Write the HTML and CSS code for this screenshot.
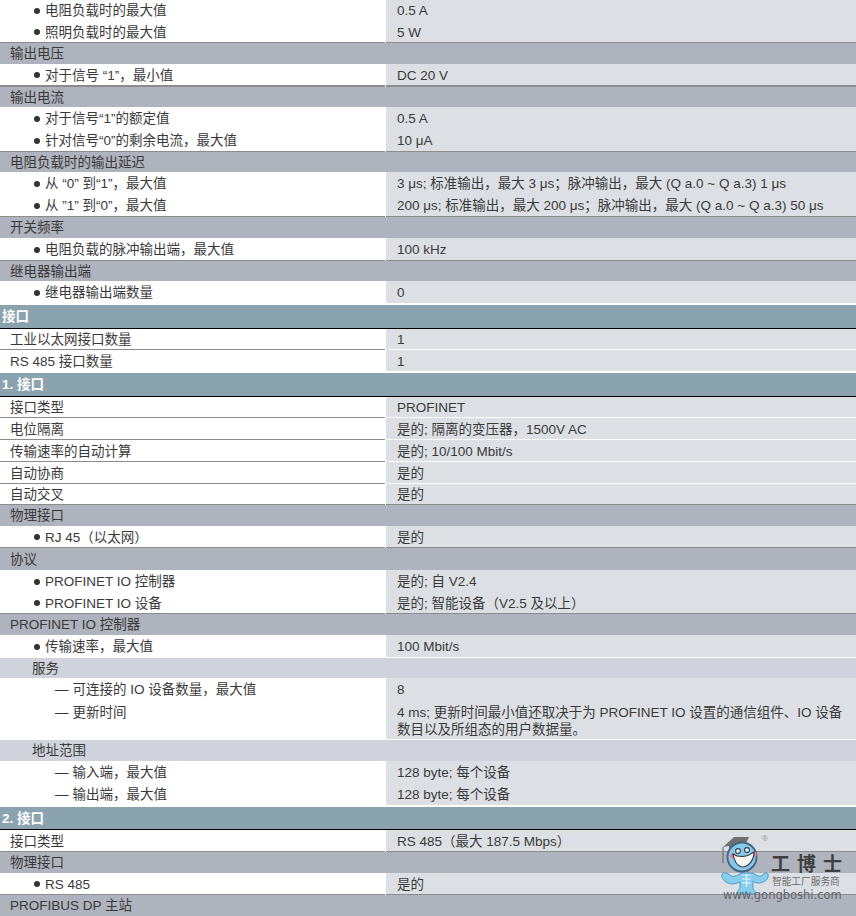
FILE: index.html
```html
<!DOCTYPE html>
<html lang="zh-CN">
<head>
<meta charset="utf-8">
<title>技术规范</title>
<link rel="stylesheet" href="styles.css">
</head>
<body>
<main class="spec">
  <div class="row h21 first"><div class="c bul">电阻负载时的最大值</div><div class="v">0.5 A</div></div>
  <div class="row h22 ln"><div class="c bul">照明负载时的最大值</div><div class="v">5 W</div></div>
  <div class="sub h21">输出电压</div>
  <div class="row h23 ln2"><div class="c bul">对于信号 “1”，最小值</div><div class="v">DC 20 V</div></div>
  <div class="sub h20">输出电流</div>
  <div class="row h22"><div class="c bul">对于信号“1”的额定值</div><div class="v">0.5 A</div></div>
  <div class="row h23 ln"><div class="c bul">针对信号“0”的剩余电流，最大值</div><div class="v">10 μA</div></div>
  <div class="sub h20">电阻负载时的输出延迟</div>
  <div class="row h22"><div class="c bul">从 “0” 到“1”，最大值</div><div class="v">3 μs; 标准输出，最大 3 μs；脉冲输出，最大 (Q a.0 ~ Q a.3) 1 μs</div></div>
  <div class="row h23 ln"><div class="c bul">从 ”1” 到“0”，最大值</div><div class="v">200 μs; 标准输出，最大 200 μs；脉冲输出，最大 (Q a.0 ~ Q a.3) 50 μs</div></div>
  <div class="sub h21">开关频率</div>
  <div class="row h23 ln"><div class="c bul">电阻负载的脉冲输出端，最大值</div><div class="v">100 kHz</div></div>
  <div class="sub h20">继电器输出端</div>
  <div class="row h22 gap2"><div class="c bul">继电器输出端数量</div><div class="v">0</div></div>
  <div class="sec h24">接口</div>
  <div class="row h21 lnw"><div class="c top">工业以太网接口数量</div><div class="v">1</div></div>
  <div class="row h21 gap2"><div class="c top">RS 485 接口数量</div><div class="v">1</div></div>
  <div class="sec h24">1. 接口</div>
  <div class="row h21 lnw"><div class="c top">接口类型</div><div class="v">PROFINET</div></div>
  <div class="row h22 lnw"><div class="c top">电位隔离</div><div class="v">是的; 隔离的变压器，1500V AC</div></div>
  <div class="row h22 lnw"><div class="c top">传输速率的自动计算</div><div class="v">是的; 10/100 Mbit/s</div></div>
  <div class="row h22 lnw"><div class="c top">自动协商</div><div class="v">是的</div></div>
  <div class="row h21 ln"><div class="c top">自动交叉</div><div class="v">是的</div></div>
  <div class="sub h21">物理接口</div>
  <div class="row h22 ln"><div class="c bul">RJ 45（以太网）</div><div class="v">是的</div></div>
  <div class="sub h22">协议</div>
  <div class="row h22"><div class="c bul">PROFINET IO 控制器</div><div class="v">是的; 自 V2.4</div></div>
  <div class="row h22 ln"><div class="c bul">PROFINET IO 设备</div><div class="v">是的; 智能设备（V2.5 及以上）</div></div>
  <div class="sub h21">PROFINET IO 控制器</div>
  <div class="row h22 gap1"><div class="c bul">传输速率，最大值</div><div class="v">100 Mbit/s</div></div>
  <div class="sub2 h20">服务</div>
  <div class="row h22"><div class="c dash">可连接的 IO 设备数量，最大值</div><div class="v">8</div></div>
  <div class="row h39 gap1 multi"><div class="c dash">更新时间</div><div class="v">4 ms; 更新时间最小值还取决于为 PROFINET IO 设置的通信组件、IO 设备数目以及所组态的用户数据量。</div></div>
  <div class="sub2 h21">地址范围</div>
  <div class="row h22"><div class="c dash">输入端，最大值</div><div class="v">128 byte; 每个设备</div></div>
  <div class="row h22 gap2"><div class="c dash">输出端，最大值</div><div class="v">128 byte; 每个设备</div></div>
  <div class="sec h23">2. 接口</div>
  <div class="row h22 ln"><div class="c top">接口类型</div><div class="v">RS 485（最大 187.5 Mbps）</div></div>
  <div class="sub h21">物理接口</div>
  <div class="row h22 ln"><div class="c bul">RS 485</div><div class="v">是的</div></div>
  <div class="sub h21">PROFIBUS DP 主站</div>
</main>

<aside class="mark">
  <svg class="mascot" width="60" height="66" viewBox="0 0 60 66" aria-hidden="true">
    <path d="M3 14 L14 4 L29 4 L25 12 L27 20 L10 22 L9 13 Z" fill="#6f6f72"/>
    <path d="M3 14 V30" stroke="#77777a" stroke-width="1.3" fill="none"/>
    <path d="M2 41 C5 38 9 41 11 43 C15 44 18 42 21 40 L33 40 C36 42 39 44 42 43 C43 40 47 39 48 41 C49 45 46 48 43 49 C39 51 35 50 33 48 L33 56 C35 58 36 60 35 61 L27 61 L26 58 L25 61 L18 61 C16 59 19 57 20 55 L20 49 C16 51 10 52 6 49 C3 47 1 44 2 41 Z" fill="#86cdee" stroke="#4f9dc2" stroke-width="1"/>
    <path d="M22 42 H31 M22 46 H31 M22 50 H31 M26.5 41 V54" stroke="#e8f6fc" stroke-width="1.2" fill="none"/>
    <circle cx="22" cy="24" r="14.5" fill="#86c9ea" stroke="#42657a" stroke-width="1.8"/>
    <circle cx="12.5" cy="23" r="2.6" fill="#e27fa8"/>
    <circle cx="34" cy="21" r="2.6" fill="#e27fa8"/>
    <circle cx="18" cy="18" r="2.4" fill="#f4fbff" stroke="#2f3f4a" stroke-width="1.1"/>
    <circle cx="27" cy="17" r="2.4" fill="#f4fbff" stroke="#2f3f4a" stroke-width="1.1"/>
    <path d="M13 21 C19 25 27 24 34 19 C34 28 28 34 22 34 C17 33 14 27 13 21 Z" fill="#f6f6f2" stroke="#3b3b3b" stroke-width="1.2"/>
  </svg>
  <span class="reg">®</span>
  <span class="brand">工博士</span>
  <span class="slogan">智能工厂服务商</span>
  <span class="url">www.gongboshi.com</span>
</aside>
</body>
</html>
```

FILE: styles.css
```css
* { box-sizing: border-box; }
html, body { margin: 0; padding: 0; background: #fff; }
body {
  position: relative;
  width: 856px;
  height: 916px;
  overflow: hidden;
  font: 13.5px/17px "Liberation Sans", "Noto Sans CJK SC", sans-serif;
  color: #3a3a3a;
}
.spec { display: flex; flex-direction: column; }

.h20 { height: 20px; }
.h21 { height: 21px; }
.h22 { height: 22px; }
.h23 { height: 23px; }
.h24 { height: 24px; }
.h39 { height: 39px; }

.row { display: flex; }
.gap1 { margin-bottom: 1px; }
.gap2 { margin-bottom: 2px; }

.c, .v { display: flex; align-items: center; padding-top: 1px; }
.first .c, .first .v { padding-top: 0; }
.c { flex: 0 0 385px; }
.v { flex: 1; margin-left: 1px; padding-right: 8px; padding-left: 11px; background: #dce0e4; }

.ln .c, .ln .v { border-bottom: 1px solid #8c8c8c; }
.ln2 .c, .ln2 .v { border-bottom: 2px solid #8c8c8c; }
.lnw .c { border-bottom: 1px solid #8c8c8c; }
.lnw .v { border-bottom: 1px solid #fff; }

.multi .c, .multi .v { display: block; padding-top: 4px; }
.multi .c { padding-left: 55px; }

.top { padding-left: 10px; }

.bul { padding-left: 34px; }
.bul::before {
  content: "";
  flex: none;
  width: 6px;
  height: 6px;
  margin-right: 5px;
  border-radius: 50%;
  background: #333;
}

.dash { padding-left: 55px; }
.dash::before { content: "—"; margin-right: 4px; }

.sub, .sub2, .sec { display: flex; align-items: center; }
.sub { padding-left: 10px; background: #afb3bd; }
.sub2 { padding-left: 32px; background: #d0d3db; }
.sec {
  padding-left: 2px;
  background: #8ba3af;
  border-bottom: 1px solid #000;
  color: #fff;
  font-weight: bold;
}

/* watermark over the table */
.mark {
  position: absolute;
  left: 0;
  top: 0;
  width: 856px;
  height: 916px;
  pointer-events: none;
}
.mascot { position: absolute; left: 720px; top: 833px; filter: blur(0.3px); }
.reg, .brand, .slogan, .url { position: absolute; white-space: nowrap; color: #4a4a4a; }
.reg { left: 762px; top: 834px; font-size: 8px; line-height: 10px; color: #8f8f8f; }
.brand {
  left: 771px;
  top: 852px;
  font: bold 19px/21px "Noto Sans CJK SC", sans-serif;
  letter-spacing: 7px;
  color: #3f3f3f;
}
.slogan { left: 772px; top: 875px; font-size: 9.7px; line-height: 13px; color: #6d6d6d; }
.url {
  left: 723px;
  top: 888px;
  font: 11.5px/14px "DejaVu Sans", sans-serif;
  color: #62656b;
}
```
